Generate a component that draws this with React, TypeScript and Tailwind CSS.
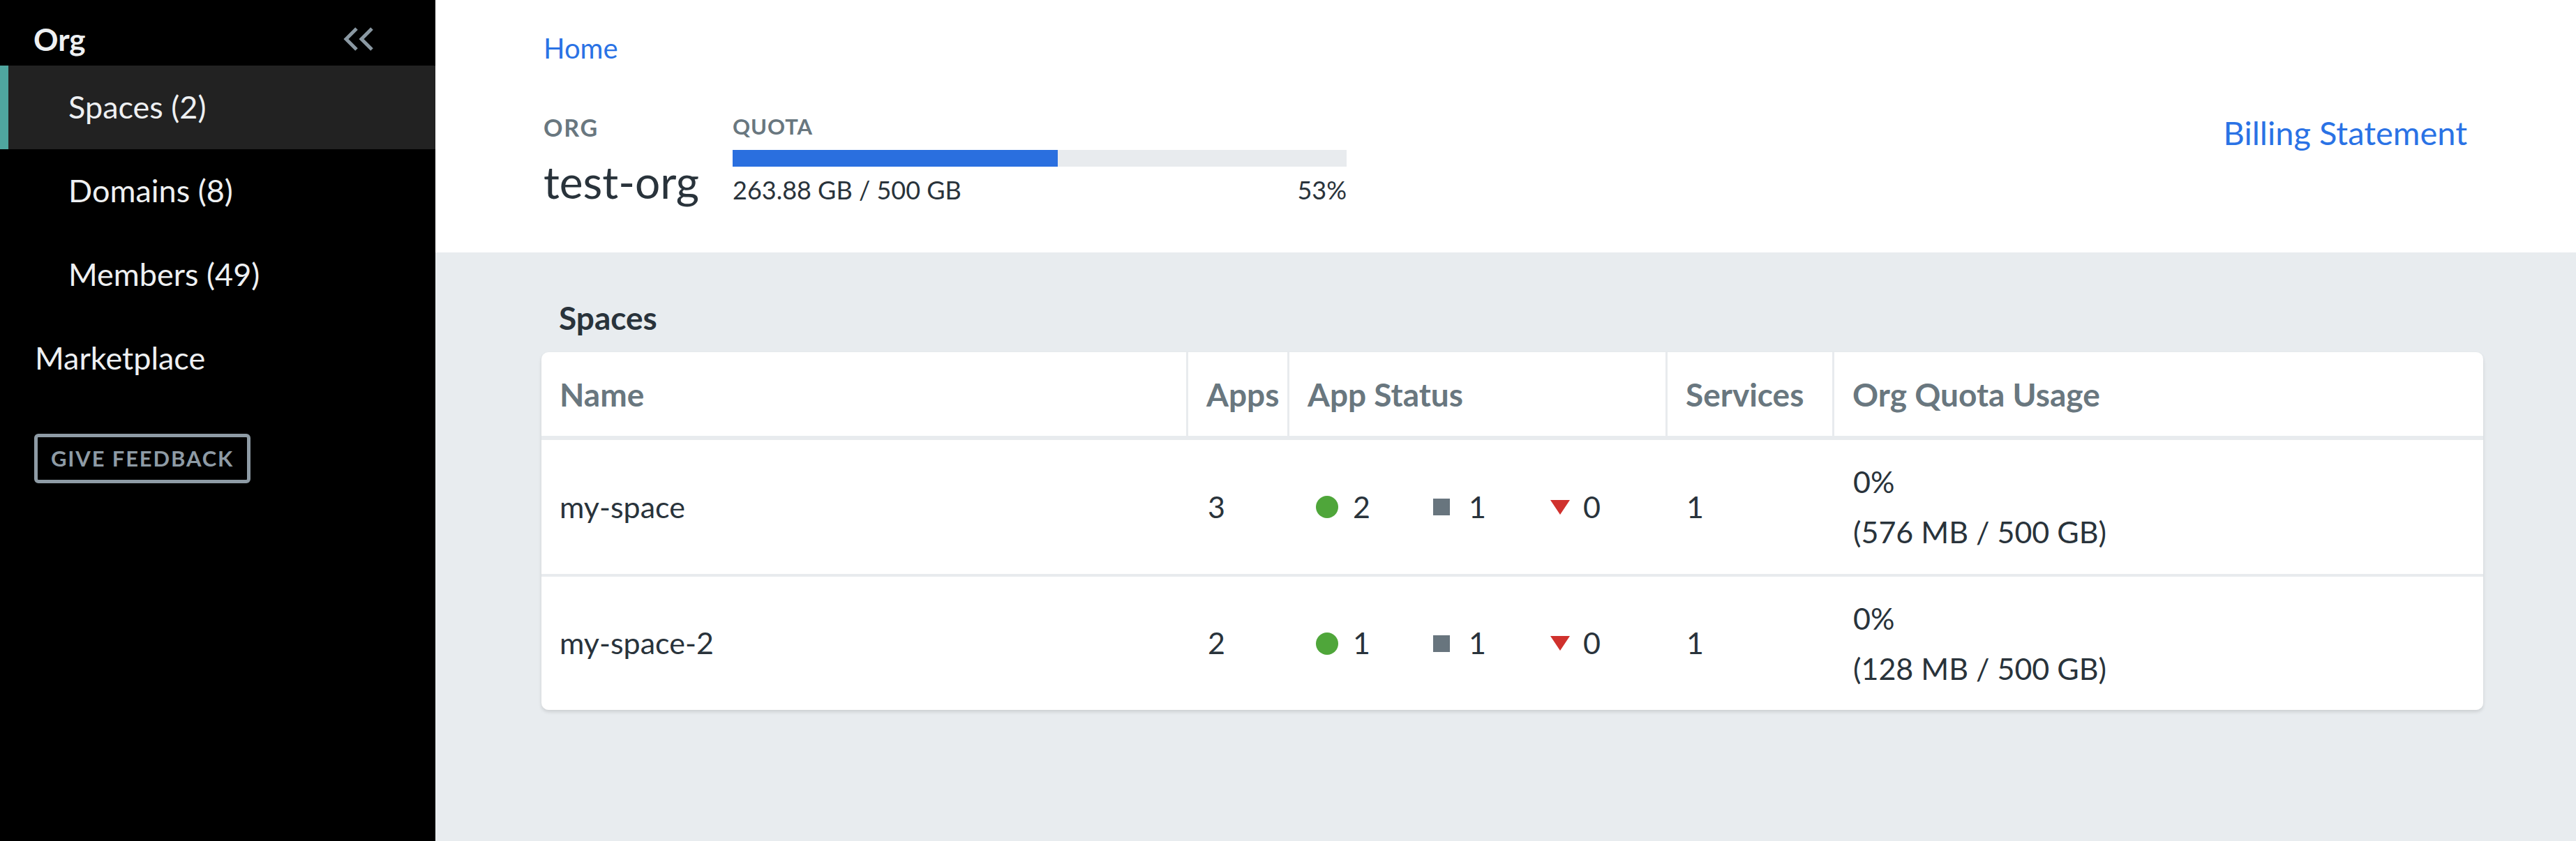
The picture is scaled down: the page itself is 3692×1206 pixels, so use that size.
import React from "react";

const font = { fontFamily: "Lato, 'Noto Sans', sans-serif" };

type Space = {
  name: string;
  apps: number;
  running: number;
  stopped: number;
  crashed: number;
  services: number;
  pct: string;
  usage: string;
};

const spaces: Space[] = [
  { name: "my-space", apps: 3, running: 2, stopped: 1, crashed: 0, services: 1, pct: "0%", usage: "(576 MB / 500 GB)" },
  { name: "my-space-2", apps: 2, running: 1, stopped: 1, crashed: 0, services: 1, pct: "0%", usage: "(128 MB / 500 GB)" },
];

function CollapseIcon() {
  return (
    <svg width="48" height="36" viewBox="0 0 48 36" fill="none">
      <path d="M21 3 L6 18 L21 33" stroke="#8a98a2" strokeWidth="5" />
      <path d="M43 3 L28 18 L43 33" stroke="#8a98a2" strokeWidth="5" />
    </svg>
  );
}

function Sidebar() {
  return (
    <aside className="w-[624px] shrink-0 bg-black text-[#eef0f2] min-h-[1206px]">
      <div className="h-[94px] flex items-center justify-between pt-[18px] pl-[48px] pr-[86px]">
        <span className="text-[44px] font-bold leading-none">Org</span>
        <CollapseIcon />
      </div>
      <div className="h-[120px] flex items-center bg-[#222222] border-l-[12px] border-[#4fa69f] pl-[86px] text-[45px]">
        Spaces (2)
      </div>
      <div className="h-[120px] flex items-center pl-[98px] text-[45px]">Domains (8)</div>
      <div className="h-[120px] flex items-center pl-[98px] text-[45px]">Members (49)</div>
      <div className="h-[120px] flex items-center pl-[50px] text-[45px]">Marketplace</div>
      <div className="pl-[49px] pt-[48px]">
        <button className="w-[310px] h-[71px] border-[5px] border-[#8e9ba5] rounded-[6px] text-[#8e9ba5] text-[31px] font-bold tracking-[0.06em]">
          GIVE FEEDBACK
        </button>
      </div>
    </aside>
  );
}

function StatusCell({ s }: { s: Space }) {
  return (
    <div className="flex items-center pl-[38px]">
      <div className="w-[168px] flex items-center">
        <span className="w-[53px] flex">
          <span className="w-[32px] h-[32px] rounded-full bg-[#4fa63a]" />
        </span>
        <span>{s.running}</span>
      </div>
      <div className="w-[168px] flex items-center">
        <span className="w-[51px] flex">
          <span className="w-[24px] h-[24px] bg-[#68757e]" />
        </span>
        <span>{s.stopped}</span>
      </div>
      <div className="flex items-center">
        <span className="w-[47px] flex">
          <svg width="28" height="21" viewBox="0 0 28 21">
            <path d="M0 0 L28 0 L14 21 Z" fill="#d0312d" />
          </svg>
        </span>
        <span>{s.crashed}</span>
      </div>
    </div>
  );
}

function SpacesTable() {
  const head = "flex items-center pl-[26px] border-r-[3px] border-[#e8ebee]";
  return (
    <div className="bg-white rounded-[10px] shadow-[0_3px_5px_rgba(0,0,0,0.12)] overflow-hidden">
      <div className="grid grid-cols-[927px_145px_542px_239px_1fr] h-[126px] border-b-[6px] border-[#e8ebee] text-[46px] font-bold text-[#69777f]">
        <div className={head}>Name</div>
        <div className={head}>Apps</div>
        <div className={head}>App Status</div>
        <div className={head}>Services</div>
        <div className="flex items-center pl-[26px]">Org Quota Usage</div>
      </div>
      {spaces.map((s, i) => (
        <div
          key={s.name}
          className={`grid grid-cols-[927px_145px_542px_239px_1fr] text-[43px] text-[#29333b] ${
            i < spaces.length - 1 ? "h-[196px] border-b-[4px] border-[#e8ebee]" : "h-[191px]"
          }`}
        >
          <div className="flex items-center pl-[26px]">{s.name}</div>
          <div className="flex items-center pl-[28px]">{s.apps}</div>
          <StatusCell s={s} />
          <div className="flex items-center pl-[27px]">{s.services}</div>
          <div className="flex flex-col justify-center pl-[27px] leading-[72px]">
            <span>{s.pct}</span>
            <span>{s.usage}</span>
          </div>
        </div>
      ))}
    </div>
  );
}

export default function App() {
  return (
    <div className="flex w-[3692px] min-h-[1206px] bg-[#e8ecef]" style={font}>
      <Sidebar />
      <main className="flex-1">
        <header className="bg-white h-[362px] pl-[155px] pr-[156px] pt-[45px]">
          <a className="text-[40px] leading-[1.2] text-[#2a72e5]">Home</a>
          <div className="flex items-start justify-between mt-[70px]">
            <div className="flex">
              <div className="w-[271px]">
                <div className="text-[34px] leading-[1.2] font-bold tracking-[0.05em] text-[#69777f]">ORG</div>
                <div className="text-[64px] leading-[1.2] text-[#29333b] mt-[19px]">test-org</div>
              </div>
              <div className="w-[880px]">
                <div className="text-[31px] leading-[1.2] font-bold tracking-[0.03em] text-[#69777f]">QUOTA</div>
                <div className="h-[24px] bg-[#e8ebee] mt-[15px]">
                  <div className="h-full bg-[#2a6fdf]" style={{ width: "53%" }} />
                </div>
                <div className="flex justify-between text-[36px] leading-[1.2] text-[#29333b] mt-[12px]">
                  <span>263.88 GB / 500 GB</span>
                  <span>53%</span>
                </div>
              </div>
            </div>
            <a className="text-[47px] leading-[1.2] text-[#2a72e5] -mt-[1px]">Billing Statement</a>
          </div>
        </header>
        <section className="pl-[152px] pr-[133px] pt-[66px]">
          <h2 className="text-[46px] leading-[1.2] font-bold text-[#29333b] mb-[22px] pl-[25px]">Spaces</h2>
          <SpacesTable />
        </section>
      </main>
    </div>
  );
}
